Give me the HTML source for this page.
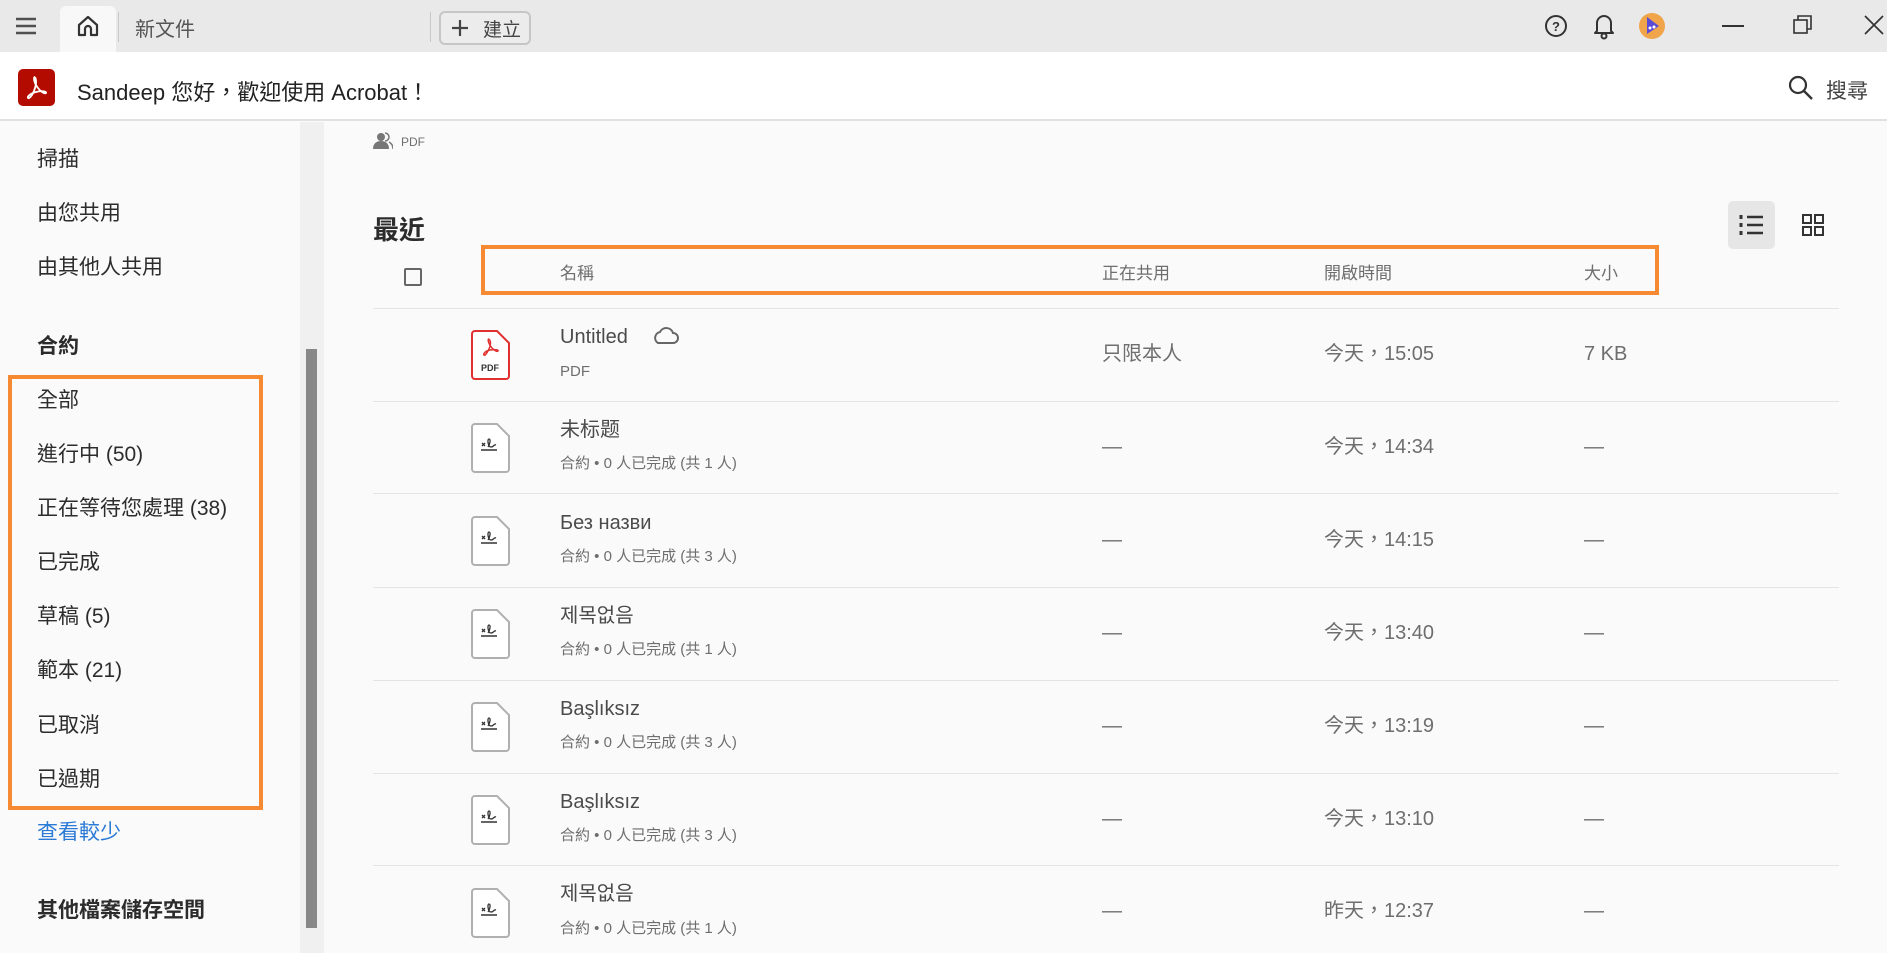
<!DOCTYPE html>
<html><head><meta charset="utf-8"><style>
*{margin:0;padding:0;box-sizing:border-box}
body{width:1887px;height:953px;overflow:hidden;background:#fafafa;font-family:"Liberation Sans","Noto Sans CJK TC",sans-serif;position:relative;color:#2c2c2c}
.a{position:absolute;white-space:nowrap}
.top{left:0;top:0;width:1887px;height:52px;background:#e9e9e9}
.hdr{left:0;top:52px;width:1887px;height:69px;background:#fff;border-bottom:2px solid #e1e1e1}
.side{font-size:21px;color:#2c2c2c;left:37px;line-height:26px}
.hl{font-size:17px;color:#6e6e6e;line-height:20px}
.t{font-size:20px;color:#4b4b4b;left:560px;line-height:24px}
.s{font-size:15px;color:#6e6e6e;left:560px;line-height:18px}
.m{font-size:20px;color:#6e6e6e;line-height:24px}
.div{left:373px;width:1466px;height:1px;background:#e4e4e4}
</style></head><body>
<div class="a top"></div>
<svg class="a" style="left:15px;top:16px" width="22" height="20"><path d="M1 3h20M1 10h20M1 17h20" stroke="#505050" stroke-width="2.6"/></svg>
<div class="a" style="left:60px;top:6px;width:56px;height:46px;background:#f8f8f8;border-radius:6px 6px 0 0"></div>
<svg class="a" style="left:76px;top:15px" width="24" height="22" viewBox="0 0 24 22"><path d="M3 10L12 2l9 8v10h-6v-6a3 3 0 0 0-6 0v6H3z" fill="none" stroke="#333" stroke-width="2.2" stroke-linejoin="round"/></svg>
<div class="a" style="left:118px;top:12px;width:1px;height:30px;background:#c8c8c8"></div>
<div class="a" style="left:135px;top:13px;font-size:20px;color:#555">新文件</div>
<div class="a" style="left:430px;top:12px;width:1px;height:30px;background:#c8c8c8"></div>
<div class="a" style="left:439px;top:11px;width:92px;height:34px;border:2px solid #c6c6c6;border-radius:6px;background:#ececec"></div>
<svg class="a" style="left:451px;top:19px" width="18" height="18"><path d="M9 1v16M1 9h16" stroke="#444" stroke-width="2.2"/></svg>
<div class="a" style="left:483px;top:15px;font-size:19px;color:#444">建立</div>
<svg class="a" style="left:1544px;top:14px" width="24" height="24"><circle cx="12" cy="12" r="10" fill="none" stroke="#333" stroke-width="2"/><text x="12" y="17" font-size="13" text-anchor="middle" fill="#333" font-family="Liberation Sans" font-weight="bold">?</text></svg>
<svg class="a" style="left:1592px;top:12px" width="24" height="28"><path d="M5 19V11a7 7 0 0 1 14 0v8l2 2H3z" fill="none" stroke="#333" stroke-width="2" stroke-linejoin="round"/><circle cx="12" cy="24" r="2.5" fill="none" stroke="#333" stroke-width="2"/></svg>
<svg class="a" style="left:1639px;top:13px" width="26" height="26"><circle cx="13" cy="13" r="13" fill="#f0a54a"/><path d="M8 4l12 9-12 8z" fill="#5a4bd6"/><circle cx="11" cy="15" r="1.5" fill="#fff"/><circle cx="15" cy="14" r="1.5" fill="#fff"/></svg>
<div class="a" style="left:1722px;top:25px;width:22px;height:2px;background:#333"></div>
<svg class="a" style="left:1793px;top:15px" width="20" height="20"><rect x="1" y="5" width="13" height="13" fill="none" stroke="#333" stroke-width="1.6"/><path d="M5 5V1h13v13h-4" fill="none" stroke="#333" stroke-width="1.6"/></svg>
<svg class="a" style="left:1864px;top:15px" width="20" height="20"><path d="M1 1l18 18M19 1L1 19" stroke="#333" stroke-width="1.7"/></svg>

<div class="a hdr"></div>
<div class="a" style="left:18px;top:69px;width:37px;height:37px;background:#b30b00;border-radius:5px"></div>
<svg class="a" style="left:18px;top:69px" width="37" height="37" viewBox="0 0 37 37"><path d="M17 8c-2 0-1 6 3 11s7 6 8 5-3-3-10-1-9 5-8 6 4-2 6-7 3-10 1-14" fill="none" stroke="#fff" stroke-width="1.8"/></svg>
<div class="a" style="left:77px;top:75px;font-size:22px;color:#222">Sandeep 您好，歡迎使用 Acrobat！</div>
<svg class="a" style="left:1788px;top:75px" width="26" height="26"><circle cx="10" cy="10" r="8" fill="none" stroke="#333" stroke-width="2.2"/><path d="M16 16l8 8" stroke="#333" stroke-width="2.4"/></svg>
<div class="a" style="left:1826px;top:75px;font-size:21px;color:#444">搜尋</div>

<div class="a" style="left:300px;top:122px;width:24px;height:831px;background:#f0f0f0"></div>
<div class="a" style="left:306px;top:349px;width:11px;height:579px;background:#888"></div>
<div class="a side" style="top:147px">掃描</div>
<div class="a side" style="top:201px">由您共用</div>
<div class="a side" style="top:255px">由其他人共用</div>
<div class="a side" style="top:334px;font-weight:bold">合約</div>
<div class="a" style="left:8px;top:375px;width:255px;height:435px;border:4px solid #f58a33"></div>
<div class="a side" style="top:388px">全部</div>
<div class="a side" style="top:442px">進行中 (50)</div>
<div class="a side" style="top:496px">正在等待您處理 (38)</div>
<div class="a side" style="top:550px">已完成</div>
<div class="a side" style="top:604px">草稿 (5)</div>
<div class="a side" style="top:658px">範本 (21)</div>
<div class="a side" style="top:713px">已取消</div>
<div class="a side" style="top:767px">已過期</div>
<div class="a side" style="top:820px;color:#2a7ad6">查看較少</div>
<div class="a side" style="top:898px;font-weight:bold">其他檔案儲存空間</div>

<svg class="a" style="left:373px;top:132px" width="20" height="18"><circle cx="8" cy="5" r="4" fill="#777"/><path d="M0 17c0-6 4-8 8-8s8 2 8 8z" fill="#777"/><path d="M12 1a4 4 0 0 1 0 8M16 10c2 1 4 3 4 7" fill="none" stroke="#777" stroke-width="1.5"/></svg>
<div class="a" style="left:401px;top:135px;font-size:12px;color:#6e6e6e">PDF</div>
<div class="a" style="left:373px;top:210px;font-size:26px;font-weight:bold;color:#2c2c2c">最近</div>
<div class="a" style="left:1728px;top:201px;width:47px;height:48px;background:#e6e6e6;border-radius:5px"></div>
<svg class="a" style="left:1739px;top:213px" width="26" height="24"><path d="M2 2v4M2 10v4M2 18v4" stroke="#333" stroke-width="3"/><path d="M8 4h16M8 12h16M8 20h16" stroke="#333" stroke-width="2.4"/></svg>
<svg class="a" style="left:1802px;top:214px" width="22" height="22"><rect x="1" y="1" width="8" height="8" fill="none" stroke="#333" stroke-width="2"/><rect x="13" y="1" width="8" height="8" fill="none" stroke="#333" stroke-width="2"/><rect x="1" y="13" width="8" height="8" fill="none" stroke="#333" stroke-width="2"/><rect x="13" y="13" width="8" height="8" fill="none" stroke="#333" stroke-width="2"/></svg>
<div class="a" style="left:404px;top:268px;width:18px;height:18px;border:2px solid #666;border-radius:2px"></div>
<div class="a" style="left:481px;top:245px;width:1178px;height:50px;border:4px solid #f58a33"></div>
<div class="a hl" style="left:560px;top:264px">名稱</div>
<div class="a hl" style="left:1102px;top:264px">正在共用</div>
<div class="a hl" style="left:1324px;top:264px">開啟時間</div>
<div class="a hl" style="left:1584px;top:264px">大小</div>

<div class="a div" style="top:308px"></div>
<div class="a div" style="top:401px"></div>
<div class="a div" style="top:493px"></div>
<div class="a div" style="top:587px"></div>
<div class="a div" style="top:680px"></div>
<div class="a div" style="top:773px"></div>
<div class="a div" style="top:865px"></div>

<svg class="a" style="left:471px;top:330px" width="40" height="50"><path d="M4 1h22l12 12v33a3 3 0 0 1-3 3H4a3 3 0 0 1-3-3V4a3 3 0 0 1 3-3z" fill="#fff" stroke="#e03030" stroke-width="2"/><path d="M18 9c-2 0 0 6 3 9s5 4 6 3-3-2-8-1-7 4-6 5 3-2 5-6 2-8 0-10" fill="none" stroke="#e03030" stroke-width="1.5"/><text x="19" y="41" font-size="9" font-weight="bold" text-anchor="middle" fill="#333" font-family="Liberation Sans">PDF</text></svg>
<div class="a t" style="top:325px">Untitled</div>
<svg class="a" style="left:651px;top:327px" width="28" height="18"><path d="M7 16h15a5 5 0 0 0 0-10 7 7 0 0 0-13-1A6 6 0 0 0 7 16z" fill="none" stroke="#666" stroke-width="2"/></svg>
<div class="a s" style="top:363px">PDF</div>
<div class="a m" style="left:1102px;top:342px">只限本人</div>
<div class="a m" style="left:1324px;top:342px">今天，15:05</div>
<div class="a m" style="left:1584px;top:342px">7 KB</div>

<svg width="0" height="0" style="position:absolute"><defs><g id="sg"><path d="M4 1h22l12 12v33a3 3 0 0 1-3 3H4a3 3 0 0 1-3-3V4a3 3 0 0 1 3-3z" fill="#fff" stroke="#b0b0b0" stroke-width="2"/><path d="M11 20l3 3M14 20l-3 3" stroke="#333" stroke-width="1.3"/><path d="M17 24c2-3 3-8 1-8s-1 8 2 8 3-3 5-2" fill="none" stroke="#333" stroke-width="1.3"/><path d="M10 27h16" stroke="#333" stroke-width="1.5"/></g></defs></svg>

<svg class="a" style="left:471px;top:423px" width="40" height="50"><use href="#sg"/></svg>
<div class="a t" style="top:418px">未标题</div>
<div class="a s" style="top:455px">合約 • 0 人已完成 (共 1 人)</div>
<div class="a m" style="left:1102px;top:435px">—</div>
<div class="a m" style="left:1324px;top:435px">今天，14:34</div>
<div class="a m" style="left:1584px;top:435px">—</div>

<svg class="a" style="left:471px;top:516px" width="40" height="50"><use href="#sg"/></svg>
<div class="a t" style="top:511px">Без назви</div>
<div class="a s" style="top:548px">合約 • 0 人已完成 (共 3 人)</div>
<div class="a m" style="left:1102px;top:528px">—</div>
<div class="a m" style="left:1324px;top:528px">今天，14:15</div>
<div class="a m" style="left:1584px;top:528px">—</div>

<svg class="a" style="left:471px;top:609px" width="40" height="50"><use href="#sg"/></svg>
<div class="a t" style="top:604px">제목없음</div>
<div class="a s" style="top:641px">合約 • 0 人已完成 (共 1 人)</div>
<div class="a m" style="left:1102px;top:621px">—</div>
<div class="a m" style="left:1324px;top:621px">今天，13:40</div>
<div class="a m" style="left:1584px;top:621px">—</div>

<svg class="a" style="left:471px;top:702px" width="40" height="50"><use href="#sg"/></svg>
<div class="a t" style="top:697px">Başlıksız</div>
<div class="a s" style="top:734px">合約 • 0 人已完成 (共 3 人)</div>
<div class="a m" style="left:1102px;top:714px">—</div>
<div class="a m" style="left:1324px;top:714px">今天，13:19</div>
<div class="a m" style="left:1584px;top:714px">—</div>

<svg class="a" style="left:471px;top:795px" width="40" height="50"><use href="#sg"/></svg>
<div class="a t" style="top:790px">Başlıksız</div>
<div class="a s" style="top:827px">合約 • 0 人已完成 (共 3 人)</div>
<div class="a m" style="left:1102px;top:807px">—</div>
<div class="a m" style="left:1324px;top:807px">今天，13:10</div>
<div class="a m" style="left:1584px;top:807px">—</div>

<svg class="a" style="left:471px;top:888px" width="40" height="50"><use href="#sg"/></svg>
<div class="a t" style="top:882px">제목없음</div>
<div class="a s" style="top:920px">合約 • 0 人已完成 (共 1 人)</div>
<div class="a m" style="left:1102px;top:899px">—</div>
<div class="a m" style="left:1324px;top:899px">昨天，12:37</div>
<div class="a m" style="left:1584px;top:899px">—</div>
</body></html>
